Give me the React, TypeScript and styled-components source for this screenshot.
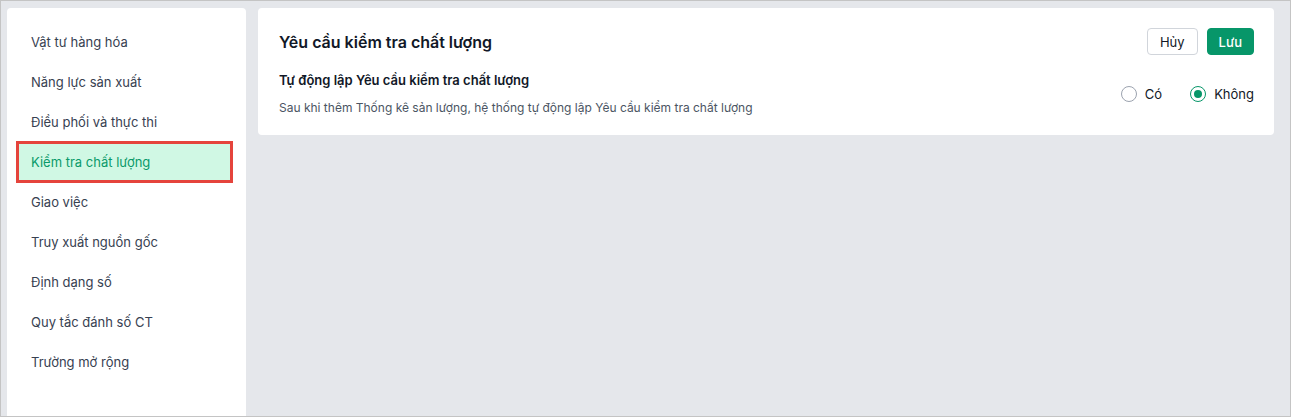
import React, { useState } from "react";
import styled, { createGlobalStyle } from "styled-components";

const GlobalStyle = createGlobalStyle`
  html, body { margin: 0; padding: 0; }
  body {
    font-family: Inter, "Noto Sans", "Liberation Sans", sans-serif;
    background: #ffffff;
  }
  * { box-sizing: border-box; }
`;

const Frame = styled.div`
  width: 1291px;
  height: 417px;
  border: 1px solid #c4c4c4;
  background: #e5e7eb;
  display: flex;
  align-items: flex-start;
  gap: 12px;
  padding: 7px 16px 0 6px;
  overflow: hidden;
`;

const Sidebar = styled.nav`
  width: 239px;
  height: 408px;
  background: #ffffff;
  border-radius: 4px 4px 0 0;
  padding: 16px 16px 0 12px;
  display: flex;
  flex-direction: column;
  gap: 4px;
`;

const NavItem = styled.div<{ $active?: boolean }>`
  height: 36px;
  display: flex;
  align-items: center;
  padding-left: 12px;
  font-size: 13px;
  color: ${(p) => (p.$active ? "#0a9a6a" : "#374151")};
  background: ${(p) => (p.$active ? "#d0f8e4" : "transparent")};
  outline: ${(p) => (p.$active ? "3px solid #e5443c" : "none")};
  cursor: pointer;
`;

const Card = styled.section`
  flex: 1;
  background: #ffffff;
  border-radius: 4px;
  padding: 20px 20px 20px 21px;
  display: flex;
  flex-direction: column;
`;

const Header = styled.div`
  display: flex;
  align-items: center;
  justify-content: space-between;
  height: 27px;
`;

const Title = styled.h1`
  margin: 0;
  font-size: 16px;
  font-weight: 600;
  color: #111827;
`;

const Actions = styled.div`
  display: flex;
  gap: 9px;
`;

const Button = styled.button<{ $primary?: boolean }>`
  height: 27px;
  padding: 0 ${(p) => (p.$primary ? "11px" : "12px")};
  font-family: inherit;
  font-size: 13px;
  font-weight: ${(p) => (p.$primary ? 500 : 400)};
  border-radius: 4px;
  border: 1px solid ${(p) => (p.$primary ? "#079669" : "#d1d5db")};
  background: ${(p) => (p.$primary ? "#079669" : "#ffffff")};
  color: ${(p) => (p.$primary ? "#ffffff" : "#111827")};
  cursor: pointer;
`;

const SettingRow = styled.div`
  display: flex;
  align-items: center;
  justify-content: space-between;
  margin-top: 17px;
`;

const SettingText = styled.div`
  display: flex;
  flex-direction: column;
  gap: 12px;
`;

const SettingLabel = styled.div`
  font-size: 13px;
  font-weight: 600;
  color: #111827;
`;

const SettingDesc = styled.div`
  font-size: 12px;
  color: #4b5563;
`;

const RadioGroup = styled.div`
  display: flex;
  align-items: center;
  gap: 28px;
`;

const RadioLabel = styled.label`
  display: flex;
  align-items: center;
  gap: 8px;
  font-size: 13px;
  color: #111827;
  cursor: pointer;
`;

const RadioCircle = styled.span<{ $checked?: boolean }>`
  width: 16px;
  height: 16px;
  border-radius: 50%;
  border: 1px solid ${(p) => (p.$checked ? "#079669" : "#9ca3af")};
  display: flex;
  align-items: center;
  justify-content: center;
  &::after {
    content: "";
    width: 8px;
    height: 8px;
    border-radius: 50%;
    background: ${(p) => (p.$checked ? "#079669" : "transparent")};
  }
`;

const items = [
  "Vật tư hàng hóa",
  "Năng lực sản xuất",
  "Điều phối và thực thi",
  "Kiểm tra chất lượng",
  "Giao việc",
  "Truy xuất nguồn gốc",
  "Định dạng số",
  "Quy tắc đánh số CT",
  "Trường mở rộng",
];

export default function App() {
  const [auto, setAuto] = useState(false);
  return (
    <>
      <GlobalStyle />
      <Frame>
        <Sidebar>
          {items.map((it) => (
            <NavItem key={it} $active={it === "Kiểm tra chất lượng"}>
              {it}
            </NavItem>
          ))}
        </Sidebar>
        <Card>
          <Header>
            <Title>Yêu cầu kiểm tra chất lượng</Title>
            <Actions>
              <Button>Hủy</Button>
              <Button $primary>Lưu</Button>
            </Actions>
          </Header>
          <SettingRow>
            <SettingText>
              <SettingLabel>Tự động lập Yêu cầu kiểm tra chất lượng</SettingLabel>
              <SettingDesc>
                Sau khi thêm Thống kê sản lượng, hệ thống tự động lập Yêu cầu kiểm tra chất lượng
              </SettingDesc>
            </SettingText>
            <RadioGroup>
              <RadioLabel onClick={() => setAuto(true)}>
                <RadioCircle $checked={auto} />
                Có
              </RadioLabel>
              <RadioLabel onClick={() => setAuto(false)}>
                <RadioCircle $checked={!auto} />
                Không
              </RadioLabel>
            </RadioGroup>
          </SettingRow>
        </Card>
      </Frame>
    </>
  );
}
